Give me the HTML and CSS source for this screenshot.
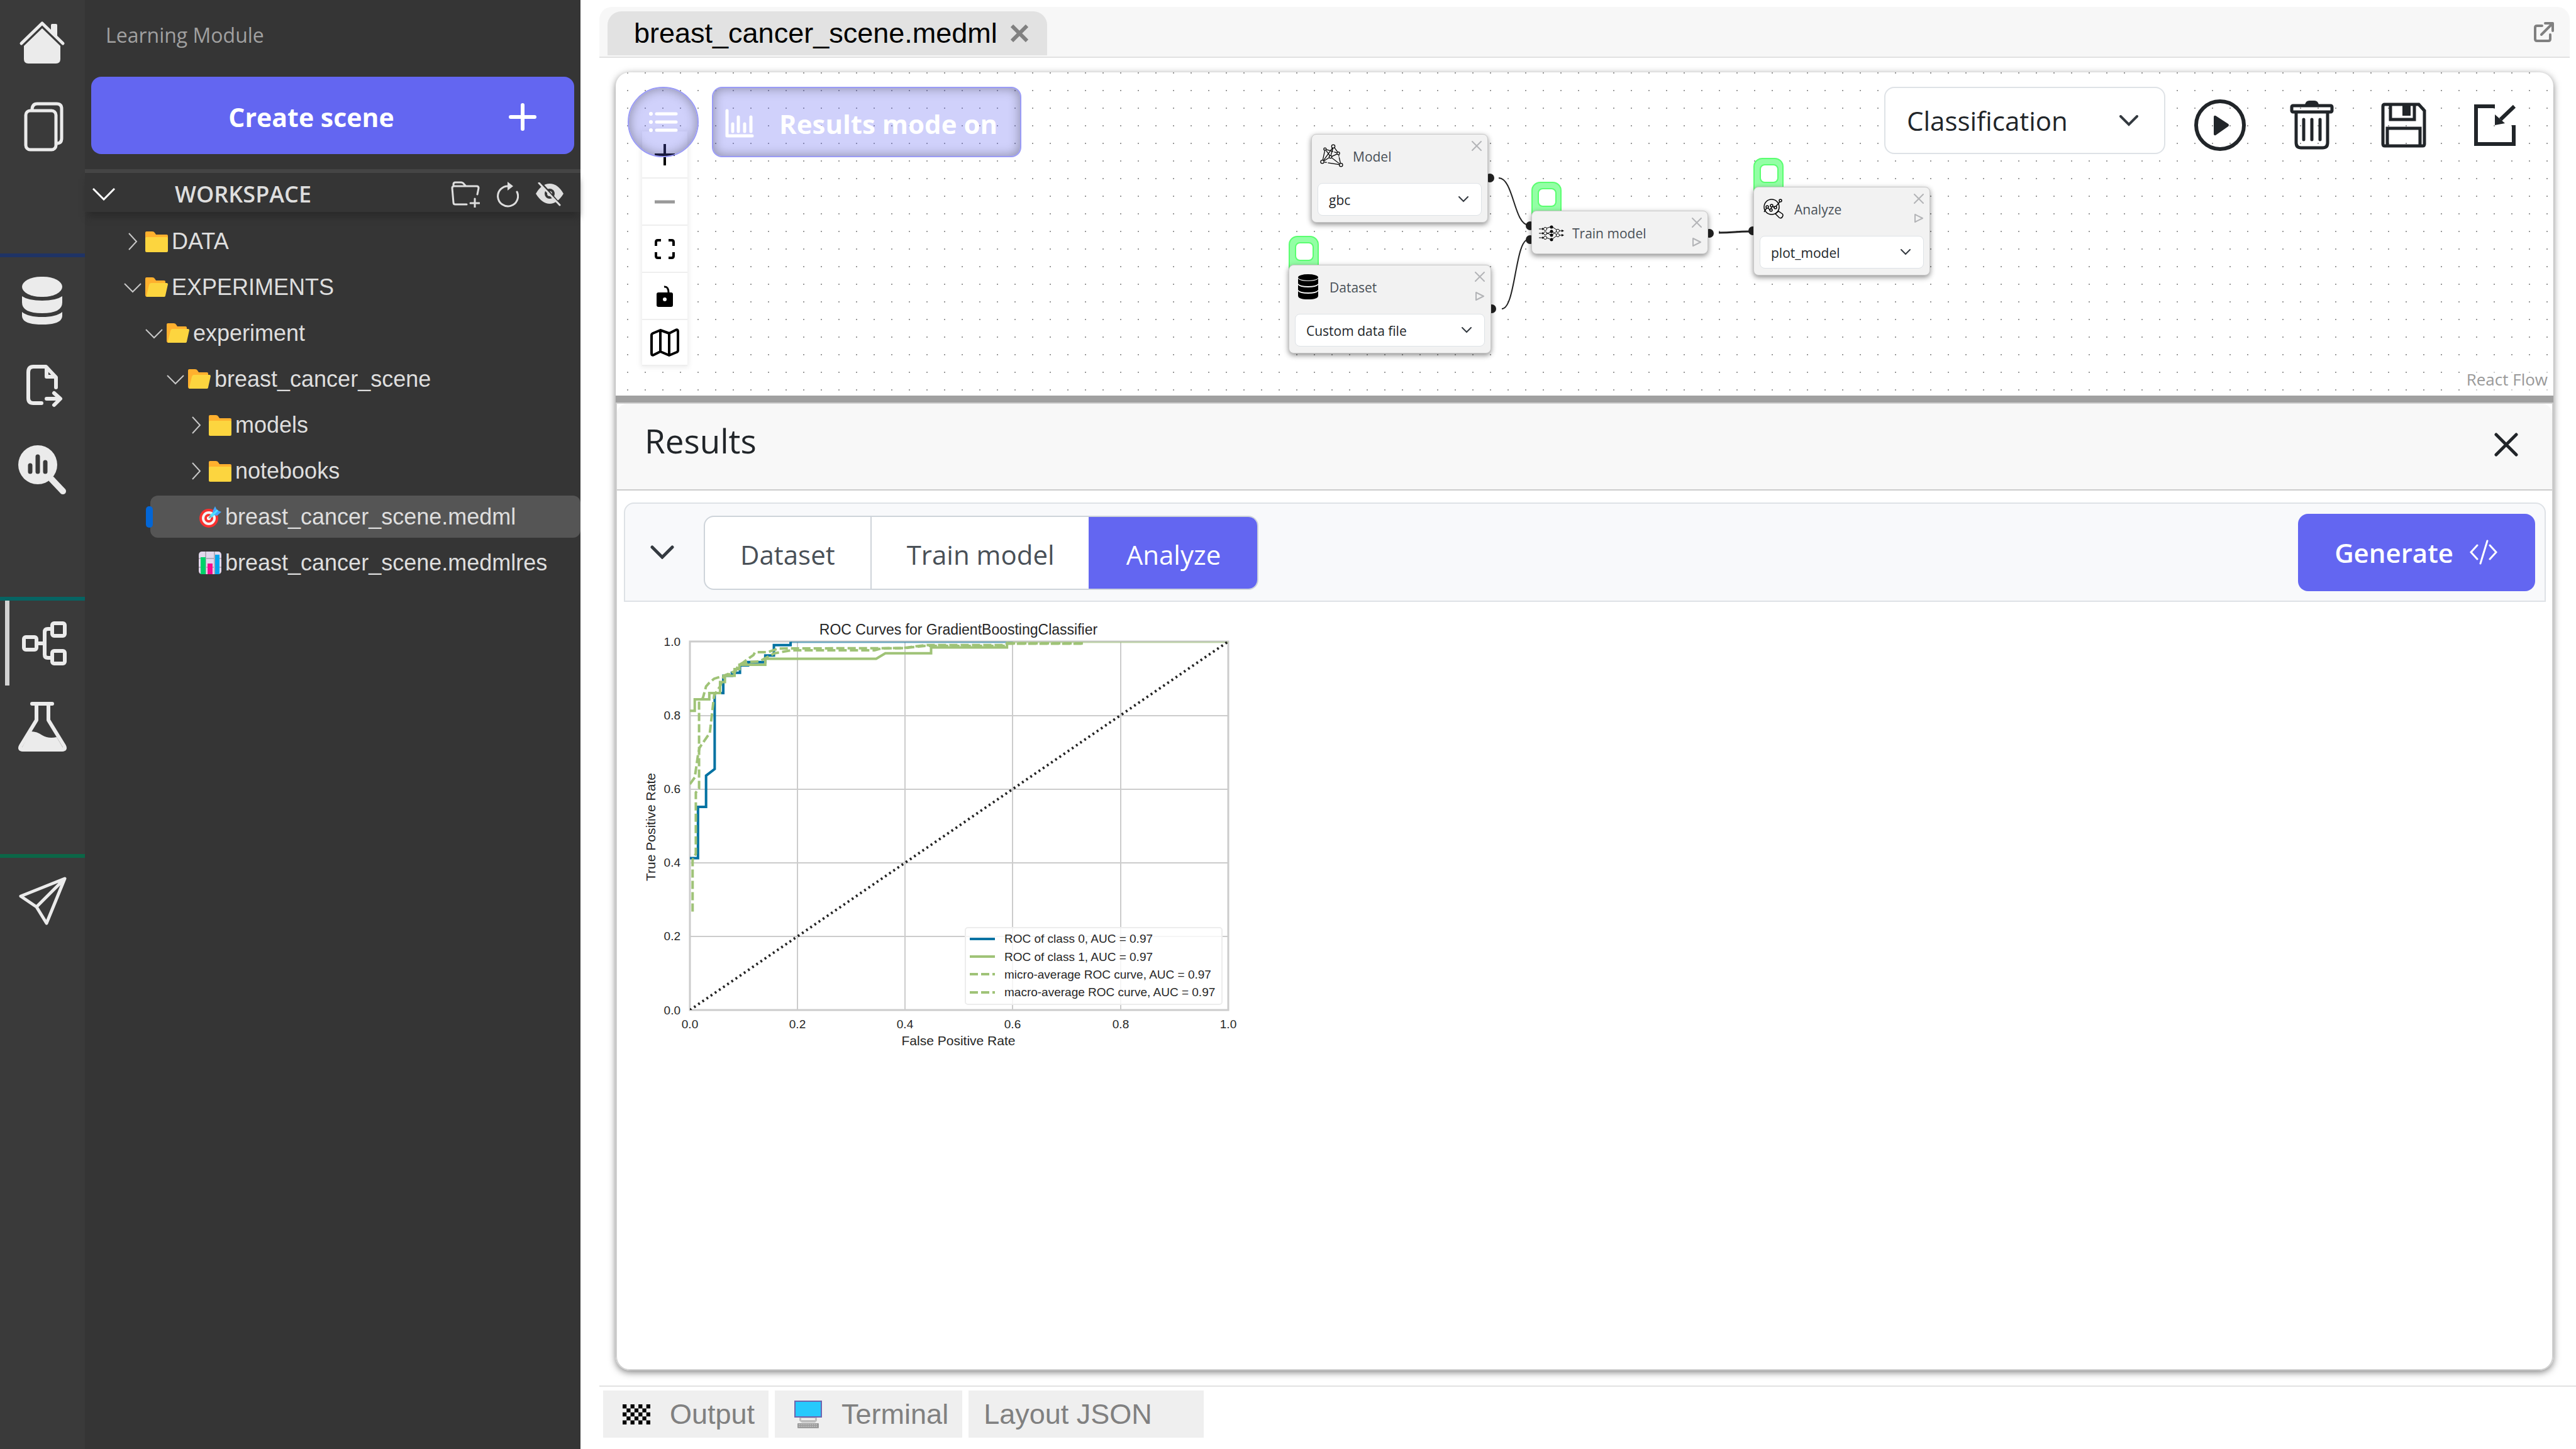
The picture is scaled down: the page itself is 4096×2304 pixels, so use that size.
FILE: index.html
```html
<!DOCTYPE html>
<html lang="en">
<head>
<meta charset="utf-8">
<title>Learning Module</title>
<link rel="stylesheet" href="styles.css">
</head>
<body>
<div class="app">
  <nav class="rail" aria-label="Modules">
    <div class="rail-group">
      <button class="rail-item" aria-label="Home"><svg viewBox="0 0 135 135"><path d="M34 69 67 37l33 32" class="s5"/><path d="M81 40q0-2 2-2h6q2 0 2 2v18L81 48z"/><path d="M67 45 96 73v21q0 7-7 7H45q-7 0-7-7V73z"/></svg></button>
      <button class="rail-item" aria-label="Files"><svg viewBox="0 135 135 135"><rect x="41" y="176" width="48" height="62" rx="7" class="s5"/><path class="s5" d="M51 175q0-10 8-10h31q8 0 8 8v47q0 8-8 8"/></svg></button>
    </div>
    <div class="rail-group rail-blue">
      <button class="rail-item" aria-label="Input data"><svg viewBox="0 409 135 135"><rect x="35" y="440" width="64" height="32" rx="30" ry="16"/><path d="M35 471q10 7 32 7t32-7v10q0 17-32 17t-32-17zM35 496q10 8 32 8t32-8v6q0 14-32 14t-32-14z"/></svg></button>
      <button class="rail-item" aria-label="Extraction"><svg viewBox="0 544 135 135"><path class="s6" d="M66 641H53q-8 0-8-8V592q0-9 8-9h20l16 17v16M74 584v15h14M74 634h21M86 625l10 9-10 10"/></svg></button>
      <button class="rail-item" aria-label="Exploratory analysis"><svg viewBox="0 679 135 135"><circle cx="60" cy="739" r="31"/><path d="M82 762l18 19" stroke-width="10" class="s"/><path class="cut" d="M48 740v10M60 726v24M72 735v15"/></svg></button>
    </div>
    <div class="rail-group rail-teal">
      <button class="rail-item rail-active" aria-label="Learning" aria-current="page"><svg viewBox="0 955 135 135"><path class="s6" d="M61 1023h9M81 1000h-5q-5 0-5 5v36q0 5 5 5h5"/><rect x="38" y="1013" width="20" height="20" rx="3" class="s6"/><rect x="83" y="991" width="20" height="20" rx="3" class="s6"/><rect x="83" y="1035" width="20" height="20" rx="3" class="s6"/></svg></button>
      <button class="rail-item" aria-label="Evaluation"><svg viewBox="0 1090 135 135"><path class="s6" d="M51 1119h32M58 1119v26l-25 41q-3 6 3 6h63q6 0 3-6l-25-41v-26"/><path d="M49 1163q10 0 18 6 10 6 23 3l12 20H33z"/></svg></button>
    </div>
    <div class="rail-group rail-green">
      <button class="rail-item" aria-label="Application"><svg viewBox="0 1365 135 135"><path class="s5" d="M103 1398 33 1426l25 17 16 26zM102 1399l-44 44"/></svg></button>
    </div>
  </nav>

  <aside class="explorer">
    <h1 class="explorer-title">Learning Module</h1>
    <button class="create"><span>Create scene</span><svg width="44" height="44" viewBox="0 0 44 44"><path d="M22 3v38M3 22h38"/></svg></button>
    <div class="workspace-head">
      <svg class="head-chevron" width="36" height="20" viewBox="0 0 36 20"><path d="M1 1l17 17L35 1"/></svg>
      <h2>WORKSPACE</h2>
      <button aria-label="New folder"><svg width="46" height="42" viewBox="0 0 46 42"><path d="M25 37H7q-3 0-3-3L2 11q0-3 3-3h36q3 0 3 3l-2 10M4 8V5q0-3 3-3h9q3 0 5 3l3 3M38 28v14M31 35h14" class="l3"/></svg></button>
      <button aria-label="Refresh"><svg width="36" height="42" viewBox="0 0 36 42"><path d="M33 17A16 16 0 1 1 20 8" class="l3"/><path d="M18 1l9 7-9 7z"/></svg></button>
      <button aria-label="Hide"><svg width="46" height="38" viewBox="0 0 46 38"><path d="M1 18Q10 2 23 2t22 16Q35 34 23 34T1 18z"/><circle cx="23" cy="18" r="8" class="hole"/><circle cx="23" cy="18" r="4"/><path d="M9 1l31 35" class="slash-bg"/><path d="M6 1l33 35" class="l3"/></svg></button>
    </div>
    <ul class="tree">
      <li><button class="row lv0"><svg class="chev" viewBox="0 0 41 30"><path d="M15 2l12 13-12 13"/></svg><svg class="ico" viewBox="0 0 36 36"><use href="#folder"/></svg>DATA</button></li>
      <li><button class="row lv0"><svg class="chev" viewBox="0 0 41 30"><path d="M8 9l13 13L34 9"/></svg><svg class="ico" viewBox="0 0 36 36"><use href="#folder-open"/></svg>EXPERIMENTS</button></li>
      <li><button class="row lv1"><svg class="chev" viewBox="0 0 41 30"><path d="M8 9l13 13L34 9"/></svg><svg class="ico" viewBox="0 0 36 36"><use href="#folder-open"/></svg>experiment</button></li>
      <li><button class="row lv2"><svg class="chev" viewBox="0 0 41 30"><path d="M8 9l13 13L34 9"/></svg><svg class="ico" viewBox="0 0 36 36"><use href="#folder-open"/></svg>breast_cancer_scene</button></li>
      <li><button class="row lv3"><svg class="chev" viewBox="0 0 41 30"><path d="M15 2l12 13-12 13"/></svg><svg class="ico" viewBox="0 0 36 36"><use href="#folder"/></svg>models</button></li>
      <li><button class="row lv3"><svg class="chev" viewBox="0 0 41 30"><path d="M15 2l12 13-12 13"/></svg><svg class="ico" viewBox="0 0 36 36"><use href="#folder"/></svg>notebooks</button></li>
      <li><button class="row file selected"><svg class="ico" viewBox="0 0 36 36"><circle cx="16" cy="20" r="15" fill="#f8312f"/><circle cx="16" cy="20" r="11" fill="#f4f4f4"/><circle cx="16" cy="20" r="7" fill="#f8312f"/><circle cx="16" cy="20" r="3" fill="#fff"/><path d="M18 18l10-9" stroke="#50e2ff" stroke-width="5"/><path d="M16 20l5-5" stroke="#9b9b9b" stroke-width="2"/><path d="M22 9l4-8 3 6 7 3-7 6-5-1z" fill="#46a4fb"/><path d="M20 17l10-10" stroke="#50e2ff" stroke-width="3"/></svg>breast_cancer_scene.medml</button></li>
      <li><button class="row file"><svg class="ico" viewBox="0 0 36 36"><rect width="36" height="36" rx="5" fill="#e1d8ec"/><path d="M11 0v36M25 0v36M0 11h36M0 25h36" stroke="#b4acbc" stroke-width="2"/><path fill="#00d26a" d="M3 9h8v27H3z"/><path fill="#f70a8d" d="M14 19h8v17h-8z"/><path fill="#00a6ed" d="M26 5h7v31h-7z"/></svg>breast_cancer_scene.medmlres</button></li>
    </ul>
  </aside>

  <main class="main">
    <div class="tabbar">
      <div class="tab"><span>breast_cancer_scene.medml</span><button aria-label="Close tab"><svg width="28" height="28" viewBox="0 0 28 28"><path d="M2 2l24 24M26 2L2 26"/></svg></button></div>
      <button class="popout" aria-label="Pop out"><svg width="32" height="32" viewBox="0 0 32 32"><path d="M13 6H5q-3 0-3 3v18q0 3 3 3h18q3 0 3-3v-7M18 2h12v12M29 3L12 20"/></svg></button>
    </div>

    <section class="panel">
      <div class="canvas">
        <svg class="edges"><path d="M1404 168C1428 168 1428 243 1452 243M1409 376C1431 376 1430 266 1451 266"/><path d="M1754 255C1779 255 1779 253 1803 253" class="thick"/></svg>

        <div class="controls">
          <button aria-label="Zoom in"><svg width="34" height="34" viewBox="0 0 34 34"><path d="M17 0v34M1 17h32" stroke="#000" stroke-width="4"/></svg></button>
          <button aria-label="Zoom out" disabled><svg width="34" height="34" viewBox="0 0 34 34"><path d="M1 17h32" stroke="#999" stroke-width="5"/></svg></button>
          <button aria-label="Fit view"><svg width="32" height="32" viewBox="0 0 32 32"><path d="M2 11V5q0-3 3-3h5M22 2h5q3 0 3 3v6M30 21v6q0 3-3 3h-5M10 30H5q-3 0-3-3v-6" fill="none" stroke="#000" stroke-width="4"/></svg></button>
          <button aria-label="Toggle lock"><svg width="26" height="34" viewBox="0 0 26 34"><rect y="11" width="26" height="23" rx="3"/><path d="M12 2q7-1 7 10" fill="none" stroke="#000" stroke-width="3"/><circle cx="13" cy="22" r="3" fill="#fff"/></svg></button>
          <button aria-label="Toggle minimap"><svg width="46" height="46" viewBox="0 0 46 46"><path d="M16 3L4 8q-2 1-2 3v29q0 4 4 2l10-5 14 6 12-5q2-1 2-3V5q0-4-4-2l-10 5zM16 3v34M30 8v35" fill="none" stroke="#000" stroke-width="4" stroke-linejoin="round"/></svg></button>
        </div>

        <article class="node node-model">
          <i class="handle" style="left:277px;top:63px"></i>
          <div class="body">
            <header><svg class="nico" width="37" height="37" viewBox="80 30 208 208"><g fill="none" stroke="#000" stroke-width="7"><path d="M122 90l-18 84M134 88l32 44M190 66l-78 110M195 68l-18 62M210 65l26 36M138 80l60 18M206 101l22 7M186 140l44-19M160 152l-44 28M184 153l68 52M248 128v14M250 148l12 52M120 192l20 3M150 198l100 15"/><circle cx="124" cy="75" r="11"/><circle cx="198" cy="51" r="15"/><circle cx="243" cy="113" r="12"/><circle cx="173" cy="145" r="12"/><circle cx="100" cy="189" r="15"/><circle cx="267" cy="217" r="15"/></g></svg><h3>Model</h3>
              <div class="acts"><button aria-label="Remove Model"><svg width="16" height="16" viewBox="0 0 16 16"><path d="M1 1l14 14M15 1L1 15"/></svg></button></div></header>
            <label class="nsel"><select aria-label="Model type"><option>gbc</option></select><svg width="16" height="10" viewBox="0 0 16 10"><path d="M1 1l7 7 7-7"/></svg></label>
          </div>
        </article>

        <article class="node node-data">
          <i class="flag"><b></b></i><i class="handle" style="left:316px;top:63px"></i>
          <div class="body">
            <header><svg class="nico" width="32" height="40" viewBox="0 0 32 40"><ellipse cx="16" cy="5" rx="16" ry="5"/><path d="M0 7q3 4 16 4t16-4v8q-3 4-16 4T0 15zM0 17q3 4 16 4t16-4v8q-3 4-16 4T0 25zM0 27q3 4 16 4t16-4v7q0 6-16 6T0 34z"/></svg><h3>Dataset</h3>
              <div class="acts"><button aria-label="Remove Dataset"><svg width="16" height="16" viewBox="0 0 16 16"><path d="M1 1l14 14M15 1L1 15"/></svg></button><button aria-label="Run Dataset"><svg width="14" height="16" viewBox="0 0 14 16"><path d="M1 2l12 6-12 6z"/></svg></button></div></header>
            <label class="nsel"><select aria-label="Dataset source"><option>Custom data file</option></select><svg width="16" height="10" viewBox="0 0 16 10"><path d="M1 1l7 7 7-7"/></svg></label>
          </div>
        </article>

        <article class="node node-train">
          <i class="flag"><b></b></i><i class="handle" style="left:-9px;top:17px"></i><i class="handle" style="left:-9px;top:39px"></i><i class="handle" style="left:276px;top:29px"></i>
          <div class="body">
            <header><svg class="nico" width="40" height="26" viewBox="0 0 40 26"><path fill="none" stroke="#000" d="M0 6h6M0 13h6M0 20h6M12 5l8-3 9 6M12 14l8-4M12 12l8 4 8-6M12 20l8 3 8-6M20 9l8 6M33 9h5M33 16h5"/><g fill="#fff" stroke="#000"><circle cx="10" cy="6" r="2.500"/><circle cx="10" cy="13" r="2.500"/><circle cx="10" cy="20" r="2.500"/><circle cx="30" cy="9" r="2.500"/><circle cx="30" cy="16" r="2.500"/></g><circle cx="20" cy="3" r="2.500"/><circle cx="20" cy="10" r="2.500"/><circle cx="20" cy="16" r="2.500"/><circle cx="20" cy="23" r="2.500"/><path d="M5 4l3 2-3 2zM5 11l3 2-3 2zM5 18l3 2-3 2zM36 7l4 2-4 2zM36 14l4 2-4 2z"/></svg><h3>Train model</h3>
              <div class="acts"><button aria-label="Remove Train model"><svg width="16" height="16" viewBox="0 0 16 16"><path d="M1 1l14 14M15 1L1 15"/></svg></button><button aria-label="Run Train model"><svg width="14" height="16" viewBox="0 0 14 16"><path d="M1 2l12 6-12 6z"/></svg></button></div></header>
          </div>
        </article>

        <article class="node node-analyze">
          <i class="flag"><b></b></i><i class="handle" style="left:-8px;top:63px"></i>
          <div class="body">
            <header><svg class="nico" width="32" height="32" viewBox="0 0 32 32"><g fill="none" stroke="#000" stroke-width="1.500"><circle cx="13" cy="13" r="12"/><path d="M1 21l4-6M7 15l4 3M12 16l1-3M14 12l4 2M20 12l6-7M19 24l6 6q3 2 5-1t0-5l-6-4z"/><circle cx="6" cy="13" r="2"/><circle cx="12" cy="18" r="2"/><circle cx="13" cy="11" r="2"/><circle cx="19" cy="14" r="2"/><circle cx="27" cy="3" r="2"/></g></svg><h3>Analyze</h3>
              <div class="acts"><button aria-label="Remove Analyze"><svg width="16" height="16" viewBox="0 0 16 16"><path d="M1 1l14 14M15 1L1 15"/></svg></button><button aria-label="Run Analyze"><svg width="14" height="16" viewBox="0 0 14 16"><path d="M1 2l12 6-12 6z"/></svg></button></div></header>
            <label class="nsel"><select aria-label="Analysis type"><option>plot_model</option></select><svg width="16" height="10" viewBox="0 0 16 10"><path d="M1 1l7 7 7-7"/></svg></label>
          </div>
        </article>

        <div class="toolbar">
          <button class="soft round" aria-label="Node list"><svg width="46" height="32" viewBox="0 0 46 32"><path d="M12 3h31M12 16h31M12 29h31" stroke-width="5"/><g fill="#fff" stroke="none"><circle cx="3" cy="3" r="3"/><circle cx="3" cy="16" r="3"/><circle cx="3" cy="29" r="3"/></g></svg></button>
          <button class="soft results-mode"><svg width="46" height="46" viewBox="0 0 46 46"><path d="M3 3v40h40M12 24v12M21 13v23M31 24v12M41 13v23" stroke-width="5"/></svg><span>Results mode on</span></button>
          <span class="grow"></span>
          <label class="mltype"><select aria-label="Machine learning type"><option>Classification</option></select><svg width="30" height="18" viewBox="0 0 30 18"><path d="M2 2l13 13L28 2"/></svg></label>
          <div class="tools">
            <button aria-label="Run"><svg width="82" height="82" viewBox="0 0 82 82"><circle cx="41" cy="41" r="38" class="t6"/><path d="M31 28q0-3 3-2l20 13q2 2 0 4L34 57q-3 1-3-2z"/></svg></button>
            <button aria-label="Clear"><svg width="70" height="78" viewBox="0 0 70 78"><path d="M24 7q1-7 7-7h8q6 0 7 7z"/><rect x="3" y="8" width="64" height="10" rx="2" class="t5"/><path class="t5" d="M10 19v48q0 8 8 8h34q8 0 8-8V19M22 30v32M35 30v32M48 30v32"/></svg></button>
            <button aria-label="Save"><svg width="72" height="72" viewBox="0 0 72 72"><path class="t5" d="M5 3h55l9 10v53q0 3-3 3H6q-3 0-3-3V6q0-3 3-3M15 3v24h38V3M10 69V41h52v28"/><path d="M34 3h13v18H34z"/></svg></button>
            <button aria-label="Import"><svg width="68" height="66" viewBox="0 0 68 66"><path class="t6" d="M33 3H3v60h60V33M64 3L42 24"/><path d="M33 16l16 14-16 3z"/></svg></button>
          </div>
        </div>
        <a class="attribution" href="#flow">React Flow</a>
      </div>

      <div class="results">
        <header class="results-head"><h2>Results</h2><button aria-label="Close results"><svg width="38" height="38" viewBox="0 0 38 38"><path d="M3 3l32 32M35 3L3 35"/></svg></button></header>
        <div class="results-body">
          <div class="pipeline">
            <svg class="pipe-chevron" width="38" height="22" viewBox="0 0 38 22"><path d="M3 3l16 16L35 3"/></svg>
            <div class="steps"><button>Dataset</button><button>Train model</button><button class="on">Analyze</button></div>
            <span class="grow"></span>
            <button class="generate"><span>Generate</span><svg width="44" height="40" viewBox="0 0 44 40"><path d="M12 9L2 20l10 11M32 9l10 11-10 11M28 2L17 38"/></svg></button>
          </div>

          <svg class="chart" width="980" height="720" viewBox="0 0 980 720" role="img" aria-label="ROC Curves for GradientBoostingClassifier">
            <path class="grid" d="M268 52v586M439 52v586M610 52v586M782 52v586M97 170h856M97 287h856M97 404h856M97 521h856"/>
            <rect class="frame" x="97" y="52" width="856" height="586"/>
            <svg x="97" y="52" width="856" height="586" viewBox="0 0 1000 1000" preserveAspectRatio="none">
              <path class="c0" d="M0 588H15V449H30V364L46 346V140H62V93H78V85H93V65H108V56H140V38H156V10H187V1"/>
              <path class="c0 faint" d="M187 1H600"/>
              <path class="c1" d="M0 188H9V157H36V140H56V110H65V93H83V75H92V63H140V47H346L363 32H448V16H589V1"/>
              <path class="c1 faint" d="M589 1H1000"/>
              <path class="c1 dash" d="M5 733V593L11 576V410L17 398V162L24 154L30 122L36 112L45 101L67 91L83 85L90 65L98 58L110 45L118 37L121 29H145L164 19L394 18L437 10H585L590 6H733"/>
              <path class="c1 dash" d="M0 387L9 369L15 308L18 288L37 248L45 146L56 122L63 93L83 81L93 63L108 56L129 54L157 32L188 24H343L355 19L398 18L437 12H585L590 5H730"/>
              <path class="diag" d="M0 1000L1000 0"/>
            </svg>
            <rect class="legend" x="535" y="507" width="408" height="122" rx="4"/>
            <path class="c0" d="M542 525h40"/><path class="c1" d="M542 553h40"/><path class="c1 dash" d="M542 581h40M542 610h40"/>
            <g class="tick">
              <text x="597" y="531">ROC of class 0, AUC = 0.97</text><text x="597" y="560">ROC of class 1, AUC = 0.97</text>
              <text x="597" y="588">micro-average ROC curve, AUC = 0.97</text><text x="597" y="616">macro-average ROC curve, AUC = 0.97</text>
              <g text-anchor="end"><text x="82" y="59">1.0</text><text x="82" y="176">0.8</text><text x="82" y="293">0.6</text><text x="82" y="410">0.4</text><text x="82" y="527">0.2</text><text x="82" y="645">0.0</text></g>
              <g text-anchor="middle"><text x="97" y="667">0.0</text><text x="268" y="667">0.2</text><text x="439" y="667">0.4</text><text x="610" y="667">0.6</text><text x="782" y="667">0.8</text><text x="953" y="667">1.0</text></g>
            </g>
            <g class="axis" text-anchor="middle"><text x="524" y="694">False Positive Rate</text><text transform="translate(42 347) rotate(-90)">True Positive Rate</text></g>
            <text class="ctitle" x="524" y="41" text-anchor="middle">ROC Curves for GradientBoostingClassifier</text>
          </svg>
        </div>
      </div>
    </section>

    <footer class="dock">
      <button><svg width="44" height="32" viewBox="0 0 7 5" preserveAspectRatio="none"><path d="M0 0h1v1H0zM2 0h1v1H2zM4 0h1v1H4zM6 0h1v1H6zM1 1h1v1H1zM3 1h1v1H3zM5 1h1v1H5zM0 2h1v1H0zM2 2h1v1H2zM4 2h1v1H4zM6 2h1v1H6zM1 3h1v1H1zM3 3h1v1H3zM5 3h1v1H5zM0 4h1v1H0zM2 4h1v1H2zM4 4h1v1H4zM6 4h1v1H6z"/></svg>Output</button>
      <button><svg width="44" height="44" viewBox="0 0 44 44"><path fill="#bebebe" d="M8 26h28v6l-3 3H12l-4-3z"/><path fill="#efefef" d="M11 28h22v3H11z"/><rect x="1" y="1" width="42" height="25" fill="#26c9fc" stroke="#7064ad" stroke-width="2"/><rect x="5" y="36" width="34" height="8" rx="1" fill="#9b9b9b"/><path d="M7 38h30M7 41h30" stroke="#d3d3d3" stroke-dasharray="2 1"/></svg>Terminal</button>
      <button class="dock-wide">Layout JSON</button>
    </footer>
  </main>
</div>

<svg class="defs" aria-hidden="true">
  <symbol id="folder" viewBox="0 0 36 36"><path fill="#ffb02e" d="M0 4q0-2 2-2h9q3 0 4 2l2 3h17q2 0 2 2v6H0z"/><rect y="11" width="36" height="24" rx="2" fill="#fcd53f"/></symbol>
  <symbol id="folder-open" viewBox="0 0 36 36"><path fill="#ffb02e" d="M0 4q0-2 2-2h9q3 0 4 2l2 3h13q2 0 2 2v20L3 33q-3 0-3-3z"/><path fill="#fcd53f" d="M9 11h25q2 0 2 2l-4 18q0 2-3 2H3q-2 0-1-2l4-17q1-3 3-3z"/></symbol>
</svg>
</body>
</html>
```
FILE: styles.css
```css
* { box-sizing: border-box; }
body { margin: 0; background: #fff; font-family: "Open Sans", "Noto Sans", sans-serif; color: #212529; }
button, select { font: inherit; color: inherit; margin: 0; padding: 0; border: 0; background: none; }
h1, h2, h3, ul { margin: 0; padding: 0; font-size: inherit; font-weight: 400; }
svg { display: block; flex: none; }
.defs { position: absolute; width: 0; height: 0; }
.grow { flex: 1; }

.app { display: flex; min-height: 100vh; }

/* module rail */
.rail { flex: none; width: 135px; background: #3a3a3a; }
.rail-group { margin-bottom: 133px; }
.rail-blue { border-top: 6px solid #1f3365; margin-bottom: 135px; }
.rail-teal { border-top: 6px solid #066463; }
.rail-green { border-top: 6px solid #0b6647; }
.rail-item { display: block; width: 135px; height: 135px; }
.rail-item svg { width: 135px; height: 135px; fill: #ebebeb; }
.rail-active { box-shadow: inset 8px 0 #3a3a3a, inset 15px 0 #d3d3d3; }
.rail .s, .rail .s5, .rail .s6 { stroke: #ebebeb; stroke-linecap: round; stroke-linejoin: round; }
.rail .s5, .rail .s6 { fill: none; }
.rail .s5 { stroke-width: 5px; }
.rail .s6 { stroke-width: 6px; }
.rail .cut { stroke: #3a3a3a; stroke-width: 7px; stroke-linecap: round; }

/* explorer */
.explorer { flex: none; width: 788px; background: #353535; color: #dedede; }
.explorer-title { padding-left: 33px; font-size: 32px; line-height: 112px; color: #a0a0a0; }
.create { display: flex; align-items: center; width: 768px; height: 123px; margin: 10px 10px 24px; padding: 4px 60px 0 0; border-radius: 16px; background: #6366f1; color: #fff; font-size: 41px; font-weight: 700; }
.create span { flex: 1; padding-left: 36px; text-align: center; }
.create svg { stroke: #fff; stroke-width: 6px; stroke-linecap: round; }
.workspace-head { display: flex; align-items: center; height: 68px; padding: 6px 16px 0 12px; border-top: 6px solid #454545; box-shadow: 0 12px 10px -4px #2b2b2b; }
.workspace-head h2 { flex: 1; padding-left: 95px; font-size: 36px; font-weight: 600; line-height: 48px; }
.workspace-head button { display: flex; justify-content: center; width: 67px; }
.workspace-head svg { fill: #dedede; }
.workspace-head .head-chevron { fill: none; stroke: #fff; stroke-width: 3px; }
.workspace-head .l3 { fill: none; stroke: #dedede; stroke-width: 3px; stroke-linecap: round; }
.workspace-head .hole { fill: #353535; }
.workspace-head .slash-bg { stroke: #353535; stroke-width: 4px; }
.tree { list-style: none; padding-top: 10px; font-family: "Liberation Sans", Arial, sans-serif; font-size: 36px; }
.row { display: flex; align-items: center; width: 100%; height: 73px; text-align: left; }
.lv0 { padding-left: 55px; }
.lv1 { padding-left: 89px; }
.lv2 { padding-left: 123px; }
.lv3 { padding-left: 156px; }
.file { padding-left: 181px; }
.selected { position: relative; width: 684px; height: 67px; margin: 3px 0 3px 104px; padding-left: 77px; border-radius: 12px; background: #555; }
.selected::before { content: ""; position: absolute; left: -7px; top: 17px; width: 11px; height: 34px; border-radius: 5px; background: #0366d6; }
.chev { width: 41px; height: 30px; fill: none; stroke: #c8c8c8; stroke-width: 2px; }
.ico { width: 36px; height: 36px; margin-right: 6px; }

/* main column */
.main { flex: 1; min-width: 0; display: flex; flex-direction: column; height: 100vh; padding: 11px 0 0 30px; font-size: 42px; }
.tabbar { flex: none; display: flex; align-items: center; justify-content: space-between; height: 81px; margin-right: 10px; padding: 0 25px 0 13px; border-bottom: 2px solid #e2e2e2; border-radius: 20px 20px 0 0; background: #f7f7f7; font-family: "Liberation Sans", Arial, sans-serif; font-size: 45px; color: #000; }
.tab { display: flex; align-items: center; gap: 21px; height: 70px; margin-top: 4px; padding: 0 30px 0 42px; border-radius: 22px 22px 0 0; background: #e2e2e2; }
.tab svg, .popout svg { fill: none; stroke: gray; }
.tab svg { stroke-width: 6px; }
.popout svg { stroke-width: 4px; stroke-linecap: round; stroke-linejoin: round; }

.panel { flex: 1; min-height: 0; display: flex; flex-direction: column; margin: 23px 36px 24px 26px; border-radius: 22px; overflow: hidden; background: #fff; box-shadow: 0 3px 12px rgba(0, 0, 0, .5); }
.canvas { position: relative; flex: none; height: 525px; border-bottom: 11px solid #a0a0a0; background: radial-gradient(circle at 1px 1px, #999 1px, transparent 1px) 18px 0 / 28px 28px; }
.edges { position: absolute; inset: 0; width: 100%; height: 100%; fill: none; stroke: #222; stroke-width: 2px; }
.edges .thick { stroke-width: 3px; }

.toolbar { position: absolute; inset: 23px 19px auto 19px; display: flex; align-items: flex-start; }
.soft { display: flex; align-items: center; justify-content: center; height: 112px; border: 2px solid #9a9bf6; background: rgba(99, 102, 241, .3); box-shadow: inset 0 0 18px rgba(0, 0, 0, .35); color: #fff; font-weight: 700; }
.soft svg { fill: none; stroke: #fff; stroke-linecap: round; stroke-linejoin: round; }
.round { width: 113px; border-radius: 57px; }
.results-mode { gap: 40px; margin-left: 21px; padding: 4px 36px 0 19px; border-radius: 16px; }
.mltype { position: relative; display: flex; align-items: center; width: 447px; height: 107px; margin-right: 14px; }
.mltype select { width: 100%; height: 100%; padding: 0 34px; border: 2px solid #dee2e6; border-radius: 16px; background: #fff; appearance: none; }
.mltype svg { position: absolute; right: 43px; fill: none; stroke: #343a40; stroke-width: 4px; stroke-linecap: round; }
.tools { display: flex; }
.tools button { display: flex; align-items: center; justify-content: center; width: 146px; height: 122px; }
.tools svg { fill: #212529; }
.tools .t5, .tools .t6 { fill: none; stroke: #212529; stroke-width: 5px; stroke-linecap: round; }
.tools .t6 { stroke-width: 6px; stroke-linecap: butt; }
.attribution { position: absolute; right: 0; bottom: 0; padding: 2px 9px 8px; background: rgba(255, 255, 255, .5); font-size: 26px; line-height: 36px; color: #999; text-decoration: none; }

.controls { position: absolute; left: 42px; top: 94px; width: 72px; background: #fff; box-shadow: 0 0 8px 2px rgba(0, 0, 0, .08); }
.controls button { display: flex; align-items: center; justify-content: center; width: 100%; height: 75px; border-bottom: 2px solid #eee; }
.controls button:last-child { height: 73px; }

/* flow nodes */
.node { position: absolute; width: 281px; font-size: 21px; }
.node-model { left: 1106px; top: 98px; }
.node-data { left: 1070px; top: 306px; width: 322px; }
.node-train { left: 1456px; top: 220px; }
.node-analyze { left: 1809px; top: 182px; }
.handle { position: absolute; width: 14px; height: 14px; border-radius: 7px; background: #222; }
.flag { position: absolute; left: 0; top: -46px; width: 48px; height: 60px; padding: 8px; border: 2px solid #5aff70; border-radius: 14px 14px 0 0; background: #93ffa5; }
.flag b { display: block; width: 30px; height: 30px; border: 2px solid #5aff70; border-radius: 8px; background: #fff; }
.body { position: relative; border: 1px solid #c8c8c8; border-radius: 8px; background: #f2f2f2; box-shadow: 0 3px 8px rgba(0, 0, 0, .45); }
.body header { display: flex; height: 77px; padding: 0 9px 0 11px; }
.node-train .body header { height: 67px; }
.nico { align-self: flex-start; margin: 15px 2px 0; }
.node-data .nico { margin: 14px 5px 0 3px; }
.node-train .nico { margin: 22px 0 0; }
.node-analyze .nico { margin: 18px 4px 0; }
.node h3 { flex: 1; padding-left: 13px; line-height: 70px; height: 70px; color: #495057; }
.acts { display: flex; flex-direction: column; align-items: center; gap: 15px; padding-top: 10px; }
.acts svg { fill: none; stroke: #b3b4b7; stroke-width: 2px; stroke-linecap: round; stroke-linejoin: round; }
.nsel { position: relative; display: flex; align-items: center; height: 52px; margin: 0 9px 10px; }
.nsel select { width: 100%; height: 100%; padding: 1px 17px 0; border: 1px solid #dee2e6; border-radius: 8px; background: #fff; appearance: none; }
.nsel svg { position: absolute; right: 21px; fill: none; stroke: #343a40; stroke-width: 2px; stroke-linecap: round; }

/* results */
.results { flex: 1; display: flex; flex-direction: column; border: 2px solid #d0d0d0; border-radius: 0 0 22px 22px; }
.results-head { display: flex; align-items: center; justify-content: space-between; height: 138px; padding: 0 54px 6px 44px; border-bottom: 2px solid #ccc; border-radius: 16px 16px 0 0; background: #f8f8f8; }
.results-head h2 { padding-bottom: 12px; font-size: 53px; font-weight: 500; line-height: 72px; }
.results-head svg { stroke: #212529; stroke-width: 5px; stroke-linecap: round; }
.results-body { padding: 19px 10px 0 11px; }
.pipeline { display: flex; align-items: center; height: 158px; padding: 0 15px 0 40px; border: 2px solid #dee2e6; border-radius: 16px 16px 0 0; background: #f8f9fb; }
.pipe-chevron { margin-right: 47px; fill: none; stroke: #343a40; stroke-width: 5px; stroke-linecap: round; }
.steps { display: flex; height: 118px; margin-top: 2px; border: 2px solid #ced4da; border-radius: 16px; overflow: hidden; background: #fff; color: #495057; }
.steps button { padding: 4px 56px 0; }
.steps button + button { border-left: 2px solid #ced4da; }
.steps .on { margin: -2px; padding: 4px 60px 0; border: 0; background: #6366f1; color: #fff; }
.generate { display: flex; align-items: center; gap: 26px; height: 123px; padding: 0 60px 0 58px; border-radius: 16px; background: #6366f1; color: #fff; font-weight: 600; }
.generate svg { fill: none; stroke: #fff; stroke-width: 3px; stroke-linecap: round; }

.chart { margin: 11px 0 0 8px; font-family: "Liberation Sans", Arial, sans-serif; fill: #262626; }
.chart .grid, .chart .frame { fill: none; stroke: #ccc; stroke-width: 2px; }
.chart .frame { stroke-width: 3px; }
.chart .c0, .chart .c1, .chart .diag { fill: none; stroke-width: 4px; vector-effect: non-scaling-stroke; }
.chart .c0 { stroke: #0272a2; }
.chart .c1 { stroke: #9fc377; }
.chart .faint { opacity: .5; }
.chart .dash { stroke-dasharray: 13 5; }
.chart .diag { stroke: #222; stroke-width: 4px; stroke-dasharray: 3 5; }
.chart .legend { fill: rgba(255, 255, 255, .8); stroke: #ededed; stroke-width: 2px; }
.tick { font-size: 19px; }
.axis { font-size: 21px; }
.ctitle { font-size: 23px; }

/* bottom dock */
.dock { flex: none; display: flex; gap: 10px; padding: 6px 6px 18px; border-top: 2px solid #e2e2e2; font-family: "Liberation Sans", Arial, sans-serif; font-size: 45px; color: gray; }
.dock button { display: flex; align-items: center; gap: 31px; height: 75px; padding: 0 22px 0 31px; background: #efefef; }
.dock .dock-wide { padding: 0 82px 0 24px; }
```
